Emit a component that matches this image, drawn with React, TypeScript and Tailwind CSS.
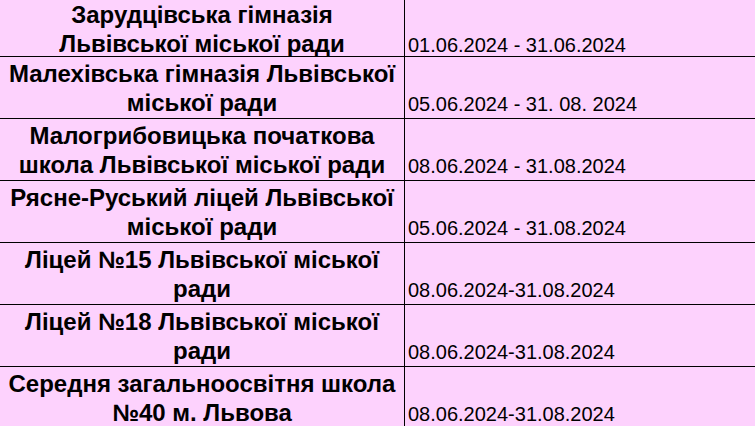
const rows = [
  { name: ["Зарудцівська гімназія", "Львівської міської ради"], dates: "01.06.2024 - 31.06.2024" },
  { name: ["Малехівська гімназія Львівської", "міської ради"], dates: "05.06.2024 - 31. 08. 2024" },
  { name: ["Малогрибовицька початкова", "школа Львівської міської ради"], dates: "08.06.2024 - 31.08.2024" },
  { name: ["Рясне-Руський ліцей Львівської", "міської ради"], dates: "05.06.2024 - 31.08.2024" },
  { name: ["Ліцей №15 Львівської міської", "ради"], dates: "08.06.2024-31.08.2024" },
  { name: ["Ліцей №18 Львівської міської", "ради"], dates: "08.06.2024-31.08.2024" },
  { name: ["Середня загальноосвітня школа", "№40 м. Львова"], dates: "08.06.2024-31.08.2024" },
];

export default function App() {
  return (
    <div
      className="w-[755px] h-[426px] overflow-hidden bg-[#fdd2fd] text-black"
      style={{ fontFamily: '"Liberation Sans", Arial, sans-serif' }}
    >
      {rows.map((row, i) => (
        <div
          key={i}
          className={`grid grid-cols-[405px_1fr] border-b border-black ${i === 0 ? "h-[57px]" : "h-[62px]"}`}
        >
          <div className="flex flex-col justify-end items-center pb-[1px] border-r border-black text-[24px] font-bold leading-[29px] text-center whitespace-nowrap">
            <span>{row.name[0]}</span>
            <span>{row.name[1]}</span>
          </div>
          <div className="flex items-end pl-[3px] pb-[2px] text-[20px] leading-[23px] whitespace-nowrap">
            {row.dates}
          </div>
        </div>
      ))}
    </div>
  );
}
